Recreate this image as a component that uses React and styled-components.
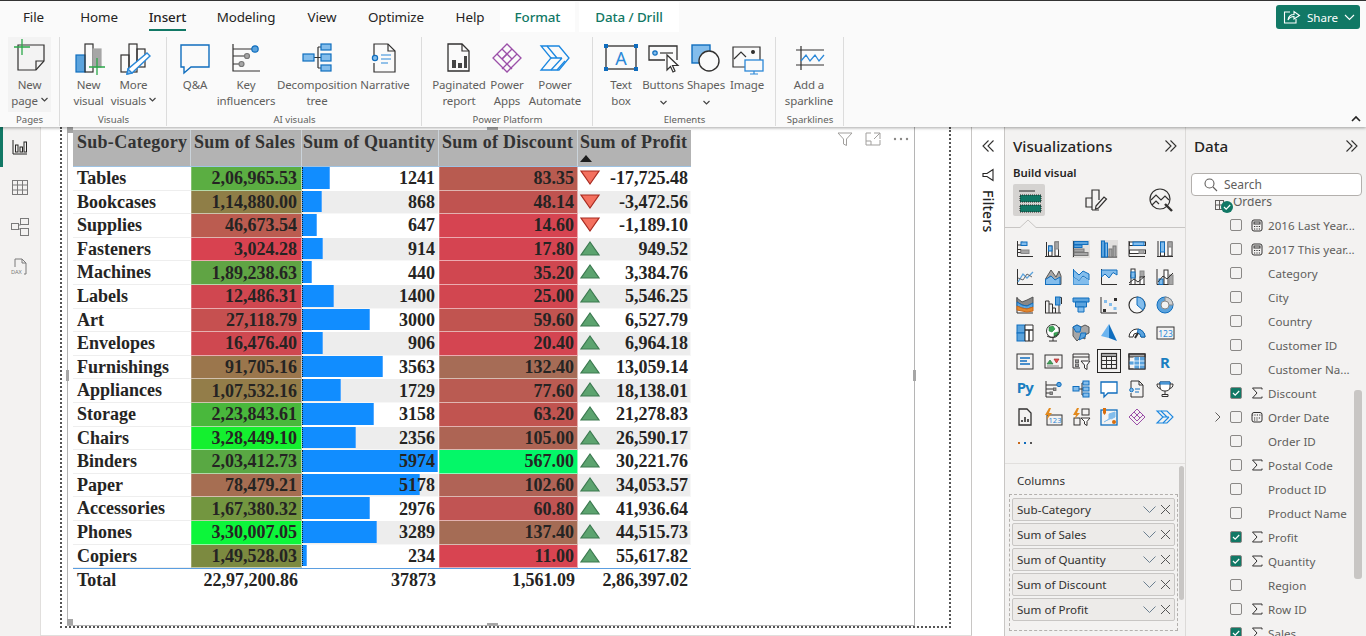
import React from "react";
import styled, { createGlobalStyle } from "styled-components";

const Global = createGlobalStyle`
  html, body { margin: 0; padding: 0; height: 636px; overflow: hidden; background: #fff; }
  body { font-family: "Noto Sans", "Open Sans", sans-serif; color: #252423; }
  * { box-sizing: border-box; }
  #root { width: 1366px; height: 636px; overflow: hidden; }
  svg { overflow: visible; }
`;

const Page = styled.div`width:1366px;height:636px;display:flex;flex-direction:column;overflow:hidden;border-top:1px solid #333;`;
const RibbonWrap = styled.header`position:relative;z-index:3;height:126px;flex:none;background:#fafafa;box-shadow:0 1px 3px rgba(0,0,0,.35);`;
const TabRow = styled.nav`height:31px;display:flex;align-items:stretch;padding-top:1px;`;
const Tab = styled.div`
  width:${p => p.$w}px;margin-right:${p => p.$mr || 0}px;padding-left:${p => p.$pl || 0}px;display:flex;justify-content:center;align-items:center;
  font-size:13.4px;position:relative;letter-spacing:-.1px;
  background:${p => p.$ctx ? "#fff" : "transparent"};color:${p => p.$ctx ? "#117865" : "#252423"};font-weight:${p => p.$ctx ? 500 : 400};
  ${p => p.$on && `font-weight:500;&::after{content:"";position:absolute;left:50%;margin-left:-19px;width:37px;bottom:1px;height:2.5px;background:#117865;}`}
`;
const ShareBtn = styled.div`
  margin-left:auto;margin-right:6px;margin-top:3px;width:84px;height:24px;border-radius:3px;background:#117865;color:#fff;
  display:flex;align-items:center;gap:6px;padding-left:7px;font-size:11.6px;font-weight:400;
`;
const GroupRow = styled.div`display:flex;height:89px;margin-top:5px;`;
const Group = styled.section`
  width:${p => p.$w}px;flex:none;padding-left:${p => p.$pl}px;display:flex;flex-direction:column;
  border-right:1px solid #dcdcdc;margin-right:1px;
`;
const GroupBtns = styled.div`display:flex;height:77px;flex:none;`;
const GroupName = styled.div`margin-left:-${p => p.$pl}px;text-align:center;font-size:9.6px;color:#605e5c;line-height:12px;`;
const RibBtn = styled.div`
  width:${p => p.$w}px;flex:none;display:flex;flex-direction:column;align-items:center;height:75px;
  font-size:11.5px;line-height:16px;color:#605e5c;text-align:center;white-space:nowrap;letter-spacing:-.12px;
  background:${p => p.$hi ? "#f3f3f3" : "transparent"};
`;
const RibIcon = styled.div`height:40px;display:flex;align-items:flex-start;padding-top:3px;flex:none;`;
const Caret = styled.span`font-size:0;display:inline-block;vertical-align:middle;margin-left:3px;`;
const Collapse = styled.div`position:absolute;right:5px;bottom:5px;line-height:0;`;

const Body = styled.main`flex:1;display:flex;min-height:0;`;
const Rail = styled.aside`width:41px;flex:none;background:#f3f2f1;border-right:1px solid #e1dfdd;display:flex;flex-direction:column;align-items:stretch;`;
const RailItem = styled.div`height:40px;display:flex;align-items:center;justify-content:center;border-left:3px solid ${p => p.$on ? "#117865" : "transparent"};padding-right:3px;`;
const Canvas = styled.div`width:931px;flex:none;background:#fff;padding:0 20px 7px 19px;display:flex;flex-direction:column;border-right:1px solid #c8c6c4;border-bottom:1px solid #e1dfdd;`;
const PageFrame = styled.div`flex:1;border-left:2px dotted #555;border-right:2px dotted #555;border-bottom:2px dotted #555;padding:0 34px 0 5px;display:flex;`;
const Visual = styled.div`position:relative;flex:1;border-left:1px solid #b5b5b5;border-right:1px solid #b5b5b5;border-bottom:1px solid #b5b5b5;padding:3px 0 0 5px;`;
const Handle = styled.span`position:absolute;background:#a6a6a6;width:${p => p.$w}px;height:${p => p.$h}px;left:${p => p.$l};top:${p => p.$t};`;
const VisualTools = styled.div`position:absolute;top:4px;right:5px;display:flex;gap:12px;align-items:center;`;

const Table = styled.div`width:618px;font-family:"Liberation Serif","Times New Roman",serif;font-weight:700;font-size:18px;color:#252423;`;
const cols = "118px 111px 137px 139px 113px";
const HeadRow = styled.div`display:grid;grid-template-columns:${cols};height:37px;background:#b3b3b3;border-bottom:1px solid #9fc3e3;`;
const HeadCell = styled.div`position:relative;padding:2px 0 0 ${p => p.$pl}px;color:#333;border-right:1px solid #cad3da;line-height:20px;white-space:nowrap;letter-spacing:.28px;&:last-child{border-right:0;}`;
const SortMark = styled.span`position:absolute;left:2px;top:25px;width:0;height:0;border-left:6px solid transparent;border-right:6px solid transparent;border-bottom:7px solid #1d1d1d;`;
const Row = styled.div`display:grid;grid-template-columns:${cols};height:23.6px;`;
const NameCell = styled.div`padding-left:4px;line-height:22px;border-bottom:1px solid #eee;white-space:nowrap;`;
const ValCell = styled.div`
  position:relative;display:flex;align-items:center;justify-content:flex-end;padding-right:${p => p.$pr}px;line-height:22px;white-space:nowrap;
  background:${p => p.$bg};border-right:1px solid rgba(255,255,255,.55);border-bottom:1px solid rgba(255,255,255,.55);box-shadow:inset 1px 0 0 rgba(255,255,255,.25);
`;
const Bar = styled.span`position:absolute;left:0;top:0;bottom:1px;background:#118dff;border-right:1px solid #55aaff;border-left:1px dotted #123;`;
const BarNum = styled.span`position:relative;`;
const Trend = styled.span`position:absolute;left:2px;top:3px;line-height:0;`;
const TotalRow = styled.div`display:grid;grid-template-columns:${cols};height:24px;border-top:1px solid #5b9ee0;`;
const TotalCell = styled.div`line-height:22px;text-align:${p => p.$left ? "left" : "right"};padding:0 ${p => p.$pr || 0}px 0 ${p => p.$left ? 4 : 0}px;white-space:nowrap;`;

const FilterPane = styled.aside`width:33px;flex:none;background:#fff;border-right:1px solid #c8c6c4;display:flex;flex-direction:column;align-items:center;padding-top:12px;gap:15px;`;
const FilterText = styled.div`writing-mode:vertical-rl;font-size:14px;font-weight:500;color:#252423;letter-spacing:.2px;margin-top:-7px;`;

const VizPane = styled.aside`width:181px;flex:none;background:#f3f2f1;border-right:1px solid #dcdad8;display:flex;flex-direction:column;min-height:0;`;
const PaneHead = styled.div`height:38px;flex:none;display:flex;align-items:center;justify-content:space-between;padding:0 ${p => p.$pr}px 0 8px;font-size:15.2px;font-weight:500;color:#252423;`;
const BuildLabel = styled.div`font-size:11.4px;font-weight:600;color:#252423;padding-left:8px;height:19px;line-height:16px;`;
const BuildTabs = styled.div`display:flex;padding-left:8px;`;
const BuildTab = styled.div`width:32px;height:32px;flex:none;margin-right:${p => p.$mr}px;display:flex;align-items:center;justify-content:center;border-radius:2px;background:${p => p.$on ? "#d5d3d1" : "transparent"};`;
const Notch = styled.div`height:12px;line-height:0;flex:none;`;
const VizGrid = styled.div`display:grid;grid-template-columns:repeat(6,28px);grid-auto-rows:28px;padding:7px 0 0 6px;height:235px;flex:none;`;
const VizCell = styled.div`display:flex;align-items:center;justify-content:center;margin-top:${p => p.$mt || 0}px;`;
const VizSel = styled.div`width:24px;height:24px;border:1px solid #252423;display:flex;align-items:center;justify-content:center;`;
const WellArea = styled.div`position:relative;flex:1;border-top:1px solid #e1dfdd;padding:8px 0 0 0;min-height:0;`;
const WellLabel = styled.div`font-size:11.6px;color:#323130;padding-left:12px;height:22px;line-height:18px;`;
const WellBox = styled.div`margin:0 7px 0 4px;border:1px dashed #b3b0ad;padding:3px 2px;height:137px;display:flex;flex-direction:column;gap:2px;`;
const Well = styled.div`height:23px;flex:none;background:#edebe9;border:1px solid #c8c6c4;border-radius:2px;display:flex;align-items:center;font-size:11.6px;color:#323130;padding:0 3px 0 4px;`;
const WellText = styled.span`flex:1;`;
const WellIcons = styled.span`display:flex;gap:4px;line-height:0;`;
const Scroll = styled.div`position:absolute;background:#c8c6c4;width:${p => p.$w}px;right:${p => p.$r}px;top:${p => p.$t}px;height:${p => p.$h}px;border-radius:3px;`;

const DataPane = styled.aside`position:relative;flex:1;background:#f3f2f1;display:flex;flex-direction:column;min-height:0;overflow:hidden;`;
const SearchBox = styled.div`flex:none;position:relative;z-index:1;margin:8px 4px 0 5px;height:23px;background:#fff;border:1px solid #b3b0ad;border-radius:4px;display:flex;align-items:center;gap:6px;padding-left:12px;font-size:12px;color:#605e5c;box-shadow:0 2px 0 #f3f2f1;`;
const FieldList = styled.div`flex:1;margin-top:-2px;min-height:0;`;
const GroupRowF = styled.div`height:19px;padding-left:47px;position:relative;font-size:12px;line-height:16px;color:#605e5c;`;
const TableGlyph = styled.span`position:absolute;left:29px;top:6px;line-height:0;`;
const OrderTick = styled.span`position:absolute;left:35px;top:7px;width:12px;height:12px;border-radius:50%;background:#117865;display:flex;align-items:center;justify-content:center;line-height:0;`;
const Field = styled.div`position:relative;height:24px;display:flex;align-items:center;padding-left:44px;font-size:11.6px;color:#605e5c;white-space:nowrap;letter-spacing:.05px;`;
const Check = styled.span`width:12px;height:12px;flex:none;border:1px solid #8a8886;border-radius:2px;display:flex;align-items:center;justify-content:center;background:${p => p.$on ? "#117865" : "transparent"};line-height:0;margin-right:8px;`;
const FieldIcon = styled.span`width:14px;flex:none;margin-right:4px;line-height:0;display:flex;justify-content:center;`;
const Expander = styled.span`position:absolute;left:29px;top:7px;line-height:0;`;

const D = "#323130", B = "#106ebe", L = "#83bdec", M = "#5ba3dd", GR = "#a6a6a6", GN = "#2ba84a";
const Ic = ({ s = 36, vb, children, sw = 1.2 }) => {
  const view = vb || s;
  return <svg width={s} height={s} viewBox={`0 0 ${view} ${view}`} fill="none" stroke={D} strokeWidth={sw}>{children}</svg>;
};

const R = {
  newPage: <Ic s={36}><path d="M6 5H32V21L24 30H6Z" /><path d="M32 21H24V30" /><path d="M10 -1V15M2 7H18" stroke={GN} strokeWidth="1.3" /></Ic>,
  newVisual: <Ic><rect x="5" y="15" width="9" height="17" fill={M} stroke={B} /><rect x="14" y="4" width="8" height="28" /><rect x="22" y="9" width="8" height="18" fill={GR} stroke={GR} /><path d="M26 18V35M18 27H34" stroke={GN} strokeWidth="1.3" /></Ic>,
  moreVisuals: <Ic><rect x="5" y="15" width="8" height="17" /><rect x="13" y="4" width="8" height="28" /><rect x="21" y="9" width="8" height="18" /><path d="M31 13L34 16L16 33L11 34L12 29Z" fill="#fff" stroke="#2b88d8" strokeWidth="1.4" /><path d="M12 29L16 33L11 34Z" fill={L} stroke="#2b88d8" /></Ic>,
  qa: <Ic><path d="M4 5H32V27H14L7 33V27H4Z" stroke={B} strokeWidth="1.4" /></Ic>,
  key: <Ic><path d="M5 4V31H32M5 9H24M5 16H16M5 24H11" /><circle cx="27" cy="9" r="3.2" fill={M} stroke={B} /><circle cx="19" cy="16" r="2.5" fill={GR} stroke="#777" /><circle cx="13.5" cy="24" r="2.5" fill={GR} stroke="#777" /></Ic>,
  decomp: <Ic><path d="M15 17.5H19M19 7V28M19 7H22M19 17.5H22M19 28H22" stroke={D} /><rect x="4" y="14" width="11" height="7" fill={L} stroke={B} /><rect x="22" y="4" width="10" height="6" fill={L} stroke={B} /><rect x="22" y="14" width="10" height="7" fill={L} stroke={B} /><rect x="22" y="25" width="10" height="6" fill={L} stroke={B} /></Ic>,
  narrative: <Ic><path d="M7 17V4H21L28 11V32H7V23" /><path d="M21 4V11H28" /><circle cx="8" cy="18" r="2.6" fill={L} stroke={B} /><path d="M14 15H24M14 19H24M14 23H21" stroke="#2b88d8" /></Ic>,
  paginated: <Ic><path d="M7 4H21L28 11V31H7Z" strokeWidth="1.3" /><path d="M21 4V11H28" /><path d="M11 20h4v8h-4zM17 23h4v5h-4zM23 16h3v12h-3z" fill="#444" stroke="none" /></Ic>,
  apps: <Ic><g stroke="#9b4fa8" strokeWidth="1.3"><path d="M18 4L32 18L18 32L4 18Z" /><path d="M13 9L23 19L18 24L8 14M23 9L13 19L18 24L28 14" /><path d="M18 14L13 19M18 24L23 29M18 24L13 29" /></g></Ic>,
  automate: <Ic><g stroke="#1b87e0" strokeWidth="1.3"><path d="M4 6H22L32 18L22 30H4L14 18Z" /><path d="M10 6L20 18M14 18H25M14 30L25 18M20 30L28 21" /></g></Ic>,
  textBox: <Ic><rect x="3" y="6" width="30" height="23" strokeWidth="1.3" /><g fill="#0f6cbd" stroke="none"><rect x="1" y="4" width="4" height="4" /><rect x="31" y="4" width="4" height="4" /><rect x="1" y="27" width="4" height="4" /><rect x="31" y="27" width="4" height="4" /></g><text x="18" y="25" textAnchor="middle" fontFamily="Noto Sans" fontSize="18" fill="#2b88d8" stroke="none">A</text></Ic>,
  buttons: <Ic><path d="M32 20V6H4V20H20" strokeWidth="1.3" /><circle cx="10" cy="13" r="2.2" fill={L} stroke={B} /><path d="M15 13H28" /><path d="M22 15V30L25.5 26.5L28 32L30 31L27.5 25.5H33Z" fill="#fff" /></Ic>,
  shapes: <Ic><rect x="4" y="5" width="18" height="18" fill={L} stroke={B} strokeWidth="1.4" /><circle cx="21" cy="21" r="10" fill="#fafafa" strokeWidth="1.4" /></Ic>,
  image: <Ic><path d="M16 27H4V7H31V20" strokeWidth="1.2" /><path d="M5 19L12 12L17 17" /><circle cx="24" cy="12" r="1.4" fill={D} /><rect x="16" y="20" width="18" height="11" fill="#fafafa" stroke="#2b88d8" strokeWidth="1.3" /><path d="M25 31V34M21 34H29" stroke="#2b88d8" /></Ic>,
  spark: <Ic><path d="M5 10H33M5 25H33M10 6V30" /><path d="M10 21L15 15L19 21L24 15L28 21L33 15" stroke="#2b88d8" strokeWidth="1.3" /></Ic>,
};

const CaretIcon = () => <svg width="7" height="5" viewBox="0 0 7 5" fill="none" stroke="#444" strokeWidth="1.2"><path d="M.5 1L3.5 4L6.5 1" /></svg>;
const DblChev = ({ left }) => <svg width="14" height="14" viewBox="0 0 14 14" fill="none" stroke="#323130" strokeWidth="1.1" style={left ? { transform: "scaleX(-1)" } : null}><path d="M1.5 1.5L7 7L1.5 12.5M6.5 1.5L12 7L6.5 12.5" /></svg>;

const V = {
  a1: <><path d="M1.5 1V16.5H17M1.5 5H6V1.5M1.5 9.5H5V12.5H1.5" /><rect x="5" y="2" width="6" height="3.5" fill={L} stroke={B} /><rect x="5" y="10" width="8" height="3.5" fill={GR} stroke="#888" /></>,
  a2: <><path d="M1 16.5H17M2.5 2V16.5" /><rect x="4.5" y="6" width="3.5" height="10" fill="#fff" /><rect x="4.5" y="6" width="3.5" height="5" fill={L} stroke={B} /><rect x="11" y="2" width="3.5" height="14" fill="#fff" /><rect x="11" y="2" width="3.5" height="7" fill={GR} stroke="#888" /></>,
  a3: <><rect x="0" y="0" width="18" height="18" fill="#e1dfdd" stroke="none" /><path d="M1.5 1V17" /><rect x="2" y="1.5" width="14" height="3" fill={M} stroke={B} /><rect x="2" y="5" width="8" height="2.5" fill={M} stroke={B} /><rect x="2" y="9" width="10" height="3" fill={GR} stroke="#777" /><rect x="2" y="12.5" width="14" height="3" fill={GR} stroke="#777" /></>,
  a4: <><rect x="0" y="0" width="18" height="18" fill="#e1dfdd" stroke="none" /><path d="M1 17H17" /><rect x="1.5" y="1" width="3" height="16" fill={M} stroke={B} /><rect x="5" y="3" width="2.5" height="14" fill={L} stroke={B} /><rect x="9" y="9" width="3" height="8" fill={GR} stroke="#777" /><rect x="13" y="6" width="3" height="11" fill={GR} stroke="#777" /></>,
  a5: <><path d="M1 1V16.5H17" /><rect x="1.5" y="2" width="16" height="3.5" fill="#fff" /><rect x="5" y="2" width="11" height="3.5" fill={L} stroke={B} /><rect x="1.5" y="10" width="16" height="3.5" fill="#fff" /><rect x="11" y="10" width="5" height="3.5" fill={GR} stroke="#888" /></>,
  a6: <><path d="M1 16.5H17M2 1V16.5" /><rect x="4.5" y="2" width="4" height="14" fill="#fff" /><rect x="4.5" y="2" width="4" height="10" fill={L} stroke={B} /><rect x="12" y="2" width="4" height="14" fill="#fff" /><rect x="12" y="2" width="4" height="5" fill={GR} stroke="#888" /></>,
  b1: <><path d="M1.5 1V16.5H17" /><path d="M2 14L7 6L11 10L17 4" stroke={M} strokeWidth="1.3" /><path d="M2 10L7 12L11 6L16 9" stroke="#666" /></>,
  b2: <><path d="M1 16.5H17" /><path d="M1.5 11L7 2L12 9L15 3L17 8V16.5H1.5Z" fill={GR} stroke="#555" /><path d="M1.5 12L7 8L12 13V16.5H1.5Z" fill="#fff" stroke={D} /><path d="M1.5 11.5L7 8L11 12L16 9V16.5H1.5Z" fill={L} stroke={B} /></>,
  b3: <><path d="M1.5 1V16.5H17" stroke={B} /><path d="M1.5 2L7 7L11 3L17 6V12L11 8L7 13L1.5 9Z" fill={L} stroke={B} /><path d="M1.5 9L7 13L11 9L17 12V16.5H1.5Z" fill={L} stroke="none" /></>,
  b4: <><path d="M1.5 1V16.5H17" stroke={D} /><path d="M1.5 2H17V7L13 4.5L9 10L5 6L1.5 9Z" fill={L} stroke={B} /></>,
  b5: <><path d="M1 16.5H17" /><rect x="3" y="7" width="4" height="9.5" fill="#fff" /><rect x="3" y="1" width="4" height="8" fill="#fff" /><rect x="3" y="4" width="4" height="6" fill={L} stroke={B} /><rect x="12" y="3" width="4" height="6" fill={GR} stroke="#888" /><rect x="12" y="9" width="4" height="7.5" fill="#fff" /><path d="M1 15L6 11L10 14L17 8" /></>,
  b6: <><path d="M1 16.5H17M1 1V16.5" /><rect x="3" y="11" width="4" height="5.5" fill={L} stroke={B} /><rect x="8" y="2" width="4" height="14.5" fill="#fff" /><rect x="13" y="7" width="4" height="9.5" fill={GR} stroke="#888" /><path d="M2 14L7 8L11 11L17 5" /></>,
  c1: <><path d="M1 1V17H17" /><path d="M1 2L6 6L11 4L17 1V7L11 10L6 9L1 6Z" fill="#888" stroke="#555" /><path d="M1 6L6 9L11 10L17 7V11L11 13L6 12L1 10Z" fill={M} stroke={B} /><path d="M1 10L6 12L11 13L17 11V15L11 16L6 15L1 14Z" fill="#e3892d" stroke="#c8681b" /></>,
  c2: <><path d="M1 17H17M1.5 5V17M1.5 5H5V17M5 8H8.5V17M8.5 12H11.5V17M11.5 3H15V17M15 1.5H17.5V8" /><rect x="11.5" y="1" width="4.5" height="8" fill={M} stroke={B} /></>,
  c3: <><path d="M1 2H17V6H1Z" fill={M} stroke={B} /><path d="M3.5 6H14.5V11H3.5Z" fill={M} stroke={B} /><path d="M6 11H12V16H6Z" fill={L} stroke={B} /></>,
  c4: <><path d="M1 1V17H17" /><rect x="3" y="13" width="3" height="3" fill={D} stroke="none" /><rect x="4" y="4" width="3" height="3" fill={L} stroke="none" /><rect x="9" y="7" width="3" height="3" fill={L} stroke="none" /><rect x="14" y="2" width="3" height="3" fill={D} stroke="none" /><rect x="13.5" y="11" width="3" height="3" fill={L} stroke="none" /></>,
  c5: <><circle cx="9" cy="9" r="8" fill="#f8f8f8" strokeWidth="1.2" /><path d="M9 1A8 8 0 0 1 15 14.2L9 9Z" fill={L} stroke={B} /></>,
  c6: <><circle cx="9" cy="9" r="8" fill={M} stroke={B} /><path d="M9 1A8 8 0 0 1 17 9H12.5A3.5 3.5 0 0 0 9 5.5Z" fill="#d0d0d0" stroke="#888" /><circle cx="9" cy="9" r="4" fill="#f3f2f1" stroke="#888" /></>,
  d1: <><rect x="1" y="1" width="8" height="8" fill={M} stroke={B} /><rect x="1" y="9" width="8" height="8" fill={M} stroke={B} /><path d="M9 1H17V6H9ZM9 6H13V17H9ZM13 6H17V17H13Z" fill="#fff" /></>,
  d2: <><circle cx="9" cy="7" r="6.5" fill="#fff" /><path d="M5 3L9 2L11 5L8 8L5 7ZM10 9L14 8L13 12L10 12Z" fill="#3aa655" stroke="#22823c" strokeWidth=".6" /><path d="M3 12A8 8 0 0 0 15 3M9 14V17M5 17H13" /></>,
  d3: <><path d="M1 3L5 1L9 3L13 1L17 3V9L13 11V15L9 13L5 17L1 12Z" fill={GR} stroke="#555" /><path d="M1 3L5 1L9 3L8 8L4 8Z" fill={M} stroke={B} /><path d="M9 9L14 9L13 13L7 16Z" fill={M} stroke={B} /></>,
  d4: <><path d="M9 0L17 17L9 14Z" fill="#106ebe" stroke="none" /><path d="M9 0L1 12L9 14Z" fill="#6bb4ef" stroke="none" /></>,
  d5: <><path d="M1 13A8 8 0 0 1 17 13H13A4 4 0 0 0 5 13Z" fill="#fff" /><path d="M10 5A8 8 0 0 1 17 13H13A4 4 0 0 0 9.5 9Z" fill={M} stroke={B} /><path d="M7 14L10 9" strokeWidth="2" /></>,
  d6: <><rect x="1" y="3" width="17" height="12" /><text x="9.5" y="12.5" textAnchor="middle" fontFamily="Noto Sans" fontSize="8.5" fill="#2b88d8" stroke="none">123</text></>,
  e1: <><rect x="1" y="2" width="16" height="15" /><path d="M4 6H14M4 9H11M4 12H14" stroke={B} strokeWidth="1.4" /></>,
  e2: <><rect x="1" y="3" width="17" height="13" /><path d="M3 12L6 8L9 12Z" fill="#43a35b" stroke="#2b7a40" strokeWidth=".7" /><path d="M10 7H15L12.5 11Z" fill="#e8504f" stroke="#a52b2b" strokeWidth=".7" /><path d="M3 14H15" strokeWidth=".6" /></>,
  e3: <><path d="M1 2H17V8M8 16H1V2M1 5H17" /><rect x="3.5" y="8" width="3" height="2.5" fill={GR} stroke="#666" /><rect x="3.5" y="12" width="3" height="2.5" fill={GR} stroke="#666" /><path d="M9 9H18L15 13V17.5L12.5 16V13Z" fill="#fff" /></>,
  e4: <><rect x="1.5" y="1.5" width="15" height="15" strokeWidth="1.2" /><rect x="1.5" y="1.5" width="15" height="3" fill={GR} /><path d="M1.5 8.5H16.5M1.5 12.5H16.5M6.5 4.5V16.5M11.5 4.5V16.5" /></>,
  e5: <><rect x="1" y="2" width="16" height="15" /><rect x="1" y="2" width="16" height="3" fill={GR} /><rect x="6" y="5" width="11" height="12" fill={M} stroke="none" /><rect x="1" y="9" width="5" height="4" fill={M} stroke="none" /><path d="M1 9H17M1 13H17M6 5V17M11.5 5V17" stroke="#fff" strokeWidth=".8" /><rect x="1" y="2" width="16" height="15" /></>,
  e6: <text x="9" y="15.5" textAnchor="middle" fontFamily="Noto Sans" fontWeight="700" fontSize="15" fill="#1a7fc1" stroke="none">R</text>,
  f1: <text x="9" y="13" textAnchor="middle" fontFamily="Noto Sans" fontWeight="700" fontSize="15" fill="#1a7fc1" stroke="none" letterSpacing="-.8">Py</text>,
  f2: <><path d="M2 1V17H17M2 5H13M2 9H9M2 13H6" /><circle cx="15" cy="4.5" r="2.2" fill={M} stroke={B} /><rect x="9.5" y="8" width="2.4" height="2.4" fill={GR} stroke="#666" /><rect x="6" y="12" width="2.4" height="2.4" fill={GR} stroke="#666" /></>,
  f3: <><path d="M7 9H10M10 3V15M10 3H11M10 9H11M10 15H11" /><rect x="1" y="6.5" width="6" height="4.5" fill={L} stroke={B} /><rect x="11" y="1" width="6" height="4" fill={L} stroke={B} /><rect x="11" y="7" width="6" height="4" fill={L} stroke={B} /><rect x="11" y="13" width="6" height="4" fill={L} stroke={B} /></>,
  f4: <path d="M1 2H17V13H8L4 17V13H1Z" fill="#fff" stroke={B} strokeWidth="1.3" />,
  f5: <><path d="M3 8V1H11L15 5V17H3V13" /><path d="M11 1V5H15" /><circle cx="3.5" cy="10" r="1.8" fill={L} stroke={B} /><path d="M7 9H12M7 12H11" stroke={B} /></>,
  f6: <><path d="M4 2H14V7C14 10 12 11 9 11C6 11 4 10 4 7Z" fill="#fff" /><path d="M4 2H14V4H4Z" fill={L} stroke={B} /><path d="M4 4H1C1 7 2 8 4.5 8.5M14 4H17C17 7 16 8 13.5 8.5M9 11V14M6 16.5H12V14.5H6Z" /></>,
  g1: <><path d="M3 1H11L15 5V17H3Z" fill="#f3f2f1" strokeWidth="1.3" /><path d="M6 14V12M9 14V9M12 14V11" strokeWidth="1.6" /></>,
  g2: <><rect x="3" y="7" width="15" height="10" /><text x="11" y="15" textAnchor="middle" fontFamily="Noto Sans" fontSize="7.5" fill="#2b88d8" stroke="none">123</text><path d="M5 0L1 7H4L2.5 12L8 5H5L7 0Z" fill="#e38a1d" stroke="none" /></>,
  g3: <><rect x="10" y="1" width="7" height="6" /><rect x="2" y="10" width="6" height="7" /><path d="M9 10H18L15 13.5V17.5L12.5 16V13.5Z" fill="#fff" /><path d="M5 0L1 7H4L2.5 11L8 5H5L7 0Z" fill="#e38a1d" stroke="none" /></>,
  g4: <><rect x="1" y="2" width="16" height="15" stroke={B} strokeWidth="1.3" /><path d="M4 14L9 11V6L15 4V9L11 11" fill={L} stroke={L} /><path d="M3 0H6V5L4.5 7L3 5Z" fill="#d86d0b" stroke="none" /><circle cx="14" cy="14" r="2" fill="#d86d0b" stroke="none" /></>,
  g5: <g stroke="#9b4fa8"><path d="M9 1L17 9L9 17L1 9Z" /><path d="M6 4L12 10L9 13L3 7M12 4L6 10L9 13L15 7" /></g>,
  g6: <g stroke="#1b87e0" strokeWidth="1.1"><path d="M1 3H11L17 9L11 15H1L7 9Z" /><path d="M5 3L11 9M7 9H13M7 15L13 9" /></g>,
};
const vizRows = ["a1 a2 a3 a4 a5 a6", "b1 b2 b3 b4 b5 b6", "c1 c2 c3 c4 c5 c6", "d1 d2 d3 d4 d5 d6", "e1 e2 e3 e4 e5 e6", "f1 f2 f3 f4 f5 f6", "g1 g2 g3 g4 g5 g6"].join(" ").split(" ");

const rows = [
  ["Tables", "2,06,965.53", "#5bae42", 1241, "83.35", "#b85b50", "-17,725.48", 0],
  ["Bookcases", "1,14,880.00", "#8f7e47", 868, "48.14", "#c05350", "-3,472.56", 0],
  ["Supplies", "46,673.54", "#bb5c50", 647, "14.60", "#d64451", "-1,189.10", 0],
  ["Fasteners", "3,024.28", "#d84250", 914, "17.80", "#d54451", "949.52", 1],
  ["Machines", "1,89,238.63", "#60a444", 440, "35.20", "#d04750", "3,384.76", 1],
  ["Labels", "12,486.31", "#d04750", 1400, "25.00", "#d24650", "5,546.25", 1],
  ["Art", "27,118.79", "#c65050", 3000, "59.60", "#c15450", "6,527.79", 1],
  ["Envelopes", "16,476.40", "#cf4850", 906, "20.40", "#d44551", "6,964.18", 1],
  ["Furnishings", "91,705.16", "#9b764c", 3563, "132.40", "#a66c56", "13,059.14", 1],
  ["Appliances", "1,07,532.16", "#937d49", 1729, "77.60", "#ba5b52", "18,138.01", 1],
  ["Storage", "2,23,843.61", "#49b83c", 3158, "63.20", "#c15450", "21,278.83", 1],
  ["Chairs", "3,28,449.10", "#14f02f", 2356, "105.00", "#ad6454", "26,590.17", 1],
  ["Binders", "2,03,412.73", "#59a843", 5974, "567.00", "#04f768", "30,221.76", 1],
  ["Paper", "78,479.21", "#a66e52", 5178, "102.60", "#b06356", "34,053.57", 1],
  ["Accessories", "1,67,380.32", "#739640", 2976, "60.80", "#c15453", "41,936.64", 1],
  ["Phones", "3,30,007.05", "#0cf63a", 3289, "137.40", "#a56c55", "44,515.73", 1],
  ["Copiers", "1,49,528.03", "#7c8a40", 234, "11.00", "#d84451", "55,617.82", 1],
];

const UpT = () => <svg width="20" height="15" viewBox="0 0 20 15"><path d="M10 1L19 14H1Z" fill="#5ca36f" stroke="#3c7a50" strokeWidth="1.2" /></svg>;
const DownT = () => <svg width="20" height="15" viewBox="0 0 20 15"><path d="M1 1H19L10 14Z" fill="#f4705f" stroke="#a82a20" strokeWidth="1.2" /></svg>;

const fields = [
  ["2016 Last Year...", 0, "calc"], ["2017 This year...", 0, "calc"], ["Category", 0], ["City", 0], ["Country", 0], ["Customer ID", 0], ["Customer Na...", 0],
  ["Discount", 1, "sum"], ["Order Date", 0, "date"], ["Order ID", 0], ["Postal Code", 0, "sum"], ["Product ID", 0], ["Product Name", 0],
  ["Profit", 1, "sum"], ["Quantity", 1, "sum"], ["Region", 0], ["Row ID", 0, "sum"], ["Sales", 1, "sum"],
];
const FIcon = ({ k }) => {
  if (k === "sum") return <svg width="12" height="12" viewBox="0 0 12 12" fill="none" stroke="#323130" strokeWidth="1"><path d="M11 2.5V1H1.5L6 6L1.5 11H11V9.5" /></svg>;
  if (k === "calc") return <svg width="12" height="13" viewBox="0 0 12 13" fill="none" stroke="#323130" strokeWidth="1"><rect x="1" y="1" width="10" height="11" rx="2" /><rect x="3" y="3" width="6" height="2" /><path d="M3 7.5H9M3 10H9" strokeDasharray="1.2 1.2" /></svg>;
  if (k === "date") return <svg width="12" height="12" viewBox="0 0 12 12" fill="none" stroke="#323130" strokeWidth="1"><rect x="1" y="1.5" width="10" height="9.5" rx="2" /><path d="M1 4H11M3 7H9M3 9H7" strokeDasharray="1.2 1.2" /></svg>;
  return null;
};
const Tick = () => <svg width="10" height="10" viewBox="0 0 10 10" fill="none" stroke="#fff" strokeWidth="1.2"><path d="M2 5L4.2 7.2L8.2 3" /></svg>;

const ribbon = [
  { name: "Pages", w: 60, pl: 8, items: [["newPage", ["New", "page"], 43, true, true]] },
  { name: "Visuals", w: 106, pl: 5, items: [["newVisual", ["New", "visual"], 45], ["moreVisuals", ["More", "visuals"], 45, true]] },
  { name: "AI visuals", w: 254, pl: 4, items: [["qa", ["Q&A"], 46], ["key", ["Key", "influencers"], 56], ["decomp", ["Decomposition", "tree"], 86], ["narrative", ["Narrative"], 50]] },
  { name: "Power Platform", w: 170, pl: 9, items: [["paginated", ["Paginated", "report"], 54], ["apps", ["Power", "Apps"], 42], ["automate", ["Power", "Automate"], 54]] },
  { name: "Elements", w: 182, pl: 6, items: [["textBox", ["Text", "box"], 42], ["buttons", ["Buttons", "caret"], 42], ["shapes", ["Shapes", "caret"], 44], ["image", ["Image"], 38]] },
  { name: "Sparklines", w: 67, pl: 2, items: [["spark", ["Add a", "sparkline"], 60]] },
];

const Lines = ({ lines, trailing }) => lines.map((l, i) => {
  if (l === "caret") return <div key={i}><CaretIcon /></div>;
  return <div key={i}>{l}{trailing && i === lines.length - 1 && <Caret><CaretIcon /></Caret>}</div>;
});

export default function App() {
  return (
    <Page>
      <Global />
      <RibbonWrap>
        <TabRow>
          <Tab $w={67}>File</Tab><Tab $w={64}>Home</Tab><Tab $w={73} $on>Insert</Tab><Tab $w={84}>Modeling</Tab><Tab $w={68}>View</Tab><Tab $w={80}>Optimize</Tab><Tab $w={64} $pl={4}>Help</Tab>
          <Tab $w={75} $mr={4} $ctx>Format</Tab><Tab $w={100} $ctx>Data / Drill</Tab>
          <ShareBtn>
            <svg width="18" height="16" viewBox="0 0 18 16" fill="none" stroke="#fff" strokeWidth="1.1"><path d="M7 3H1.5V14H13V10" /><path d="M5 11C5.5 7.5 8 5.5 11 5.5V2.5L16.5 6.5L11 10V7.5C8.5 7.5 6.5 8.5 5 11Z" /></svg>
            Share
            <svg width="11" height="7" viewBox="0 0 11 7" fill="none" stroke="#fff" strokeWidth="1.1"><path d="M1 1L5.5 5.5L10 1" /></svg>
          </ShareBtn>
        </TabRow>
        <GroupRow>
          {ribbon.map(g => (
            <Group key={g.name} $w={g.w} $pl={g.pl}>
              <GroupBtns>
                {g.items.map(([ic, lines, w, trailing, hi]) => (
                  <RibBtn key={ic} $w={w} $hi={hi}>
                    <RibIcon>{R[ic]}</RibIcon>
                    <Lines lines={lines} trailing={trailing} />
                  </RibBtn>
                ))}
              </GroupBtns>
              <GroupName $pl={g.pl}>{g.name}</GroupName>
            </Group>
          ))}
        </GroupRow>
        <Collapse><svg width="10" height="7" viewBox="0 0 10 7" fill="none" stroke="#252423" strokeWidth="1.6"><path d="M1 6L5 2L9 6" /></svg></Collapse>
      </RibbonWrap>
      <Body>
        <Rail>
          <RailItem $on>
            <svg width="16" height="15" viewBox="0 0 16 15" fill="none" stroke="#252423" strokeWidth="1"><path d="M1 0V14H15" /><rect x="3.5" y="5" width="2.5" height="7" /><rect x="8" y="7" width="2.5" height="5" /><rect x="12" y="2" width="2.5" height="10" /></svg>
          </RailItem>
          <RailItem>
            <svg width="16" height="15" viewBox="0 0 16 15" fill="none" stroke="#7a7a7a" strokeWidth="1"><rect x=".5" y=".5" width="15" height="14" /><path d="M.5 5H15.5M.5 10H15.5M5.5 .5V14.5M10.5 .5V14.5" /></svg>
          </RailItem>
          <RailItem>
            <svg width="18" height="18" viewBox="0 0 18 18" fill="none" stroke="#7a7a7a" strokeWidth="1"><rect x=".5" y="5.5" width="7" height="6" /><rect x="9.5" y=".5" width="8" height="6" /><rect x="9.5" y="10.5" width="8" height="7" /><path d="M7.5 7H9.5M7.5 11H9.5" /></svg>
          </RailItem>
          <RailItem>
            <svg width="18" height="18" viewBox="0 0 18 18" fill="none" stroke="#7a7a7a" strokeWidth="1"><path d="M4 9V1H11L15 5V16H13" /><path d="M11 1V5H15" /><text x="0" y="16" fontFamily="Noto Sans" fontSize="5.6" fill="#7a7a7a" stroke="none">DAX</text></svg>
          </RailItem>
        </Rail>
        <Canvas>
          <PageFrame>
            <Visual>
              <Handle $w={6} $h={6} $l="-1px" $t="0" />
              <Handle $w={6} $h={6} $l="-1px" $t="calc(100% - 6px)" />
              <Handle $w={3} $h={11} $l="-2px" $t="243px" />
              <Handle $w={3} $h={11} $l="calc(100% - 1px)" $t="243px" />
              <Handle $w={11} $h={3} $l="419px" $t="0" />
              <Handle $w={11} $h={3} $l="419px" $t="calc(100% - 2px)" />
              <VisualTools>
                <svg width="16" height="16" viewBox="0 0 16 16" fill="none" stroke="#a19f9d" strokeWidth="1"><path d="M1 2H15L9.5 8V14.5L6.5 13V8Z" /></svg>
                <svg width="16" height="14" viewBox="0 0 16 14" fill="none" stroke="#a19f9d" strokeWidth="1"><path d="M6 1H1V13H15V8M9 1H15V7M15 1L9 7M1 9H6V13" /></svg>
                <svg width="16" height="4" viewBox="0 0 16 4" fill="#8a8886"><circle cx="2" cy="2" r="1.2" /><circle cx="8" cy="2" r="1.2" /><circle cx="14" cy="2" r="1.2" /></svg>
              </VisualTools>
              <Table>
                <HeadRow>
                  <HeadCell $pl={4}>Sub-Category</HeadCell><HeadCell $pl={3}>Sum of Sales</HeadCell><HeadCell $pl={1}>Sum of Quantity</HeadCell><HeadCell $pl={3}>Sum of Discount</HeadCell>
                  <HeadCell $pl={2}>Sum of Profit<SortMark /></HeadCell>
                </HeadRow>
                {rows.map((r, i) => (
                  <Row key={r[0]}>
                    <NameCell>{r[0]}</NameCell>
                    <ValCell $bg={r[2]} $pr={4}>{r[1]}</ValCell>
                    <ValCell $bg={i % 2 ? "#ededed" : "#fff"} $pr={3}>
                      <Bar style={{ width: `${(r[3] / 5974) * 136}px` }} />
                      <BarNum>{r[3]}</BarNum>
                    </ValCell>
                    <ValCell $bg={r[5]} $pr={3}>{r[4]}</ValCell>
                    <ValCell $bg={i % 2 ? "#ededed" : "#fff"} $pr={2}>
                      <Trend>{r[7] ? <UpT /> : <DownT />}</Trend>
                      {r[6]}
                    </ValCell>
                  </Row>
                ))}
                <TotalRow>
                  <TotalCell $left>Total</TotalCell><TotalCell $pr={4}>22,97,200.86</TotalCell><TotalCell $pr={3}>37873</TotalCell><TotalCell $pr={3}>1,561.09</TotalCell><TotalCell $pr={3}>2,86,397.02</TotalCell>
                </TotalRow>
              </Table>
            </Visual>
          </PageFrame>
        </Canvas>
        <FilterPane>
          <DblChev left />
          <svg width="12" height="14" viewBox="0 0 12 14" fill="none" stroke="#252423" strokeWidth="1.1"><path d="M11 1.5V12.5L5 8.5H1V5.5H5Z" /></svg>
          <FilterText>Filters</FilterText>
        </FilterPane>
        <VizPane>
          <PaneHead $pr={7}>Visualizations<DblChev /></PaneHead>
          <BuildLabel>Build visual</BuildLabel>
          <BuildTabs>
            <BuildTab $on $mr={35}>
              <svg width="26" height="26" viewBox="0 0 26 26" fill="none"><path d="M3 4H19" stroke="#252423" /><rect x="4" y="8" width="21" height="7" fill="#117865" stroke="#252423" strokeDasharray="1 1" /><rect x="4" y="18" width="21" height="7" fill="#117865" stroke="#252423" strokeDasharray="1 1" /></svg>
            </BuildTab>
            <BuildTab $mr={33}>
              <svg width="24" height="24" viewBox="0 0 24 24" fill="none" stroke="#323130" strokeWidth="1.2"><path d="M8 22V10H2V19H8M8 10V2H15V12M15 22H8" /><path d="M12 18L20 9L22.5 11L14.5 20L11.5 21Z" fill="#f3f2f1" /></svg>
            </BuildTab>
            <BuildTab $mr={0}>
              <svg width="26" height="26" viewBox="0 0 26 26" fill="none" stroke="#323130" strokeWidth="1.2"><circle cx="12" cy="12" r="10" /><path d="M3 13L8 8L13 13L17 9L21 13" /><path d="M4 18L8 14L11 17" stroke="#323130" /><path d="M17 17L24 24" strokeWidth="2.4" /></svg>
            </BuildTab>
          </BuildTabs>
          <Notch><svg width="180" height="12" viewBox="0 0 180 12" fill="none" stroke="#c8c6c4"><path d="M0 11.5H15L23 4L31 11.5H180" /></svg></Notch>
          <VizGrid>
            {vizRows.map(k => (
              <VizCell key={k}>
                {k === "e4" ? <VizSel><Ic s={18} sw={1}>{V[k]}</Ic></VizSel> : <Ic s={18} sw={1}>{V[k]}</Ic>}
              </VizCell>
            ))}
            <VizCell $mt={-4}>
              <svg width="16" height="4" viewBox="0 0 16 4"><rect x="1" y="1" width="2" height="2" fill="#c8681b" /><rect x="7" y="1" width="2" height="2" fill="#0f6cbd" /><rect x="13" y="1" width="2" height="2" fill="#555" /></svg>
            </VizCell>
          </VizGrid>
          <WellArea>
            <Scroll $w={5} $r={1} $t={2} $h={134} />
            <WellLabel>Columns</WellLabel>
            <WellBox>
              {["Sub-Category", "Sum of Sales", "Sum of Quantity", "Sum of Discount", "Sum of Profit"].map(t => (
                <Well key={t}>
                  <WellText>{t}</WellText>
                  <WellIcons>
                    <svg width="13" height="11" viewBox="0 0 13 11" fill="none" strokeWidth="1"><path d="M.5 2.5L6.5 8.5L12.5 2.5" stroke="#6b7f90" /></svg>
                    <svg width="11" height="11" viewBox="0 0 11 11" fill="none" stroke="#555" strokeWidth="1"><path d="M1 1L10 10M10 1L1 10" /></svg>
                  </WellIcons>
                </Well>
              ))}
            </WellBox>
          </WellArea>
        </VizPane>
        <DataPane>
          <PaneHead $pr={7}>Data<DblChev /></PaneHead>
          <SearchBox>
            <svg width="14" height="14" viewBox="0 0 14 14" fill="none" stroke="#605e5c" strokeWidth="1.1"><circle cx="5.5" cy="5.5" r="4.5" /><path d="M9 9L13 13" /></svg>
            Search
          </SearchBox>
          <FieldList>
            <GroupRowF>
              <TableGlyph><svg width="9" height="10" viewBox="0 0 9 10" fill="none" stroke="#605e5c"><rect x=".5" y=".5" width="8" height="9" /><path d="M.5 5H8.5M4.5 .5V9.5" /></svg></TableGlyph>
              <OrderTick><Tick /></OrderTick>Orders
            </GroupRowF>
            {fields.map(([name, on, ic]) => (
              <Field key={name}>
                {name === "Order Date" && <Expander><svg width="6" height="10" viewBox="0 0 6 10" fill="none" stroke="#605e5c"><path d="M.5 .5L5 5L.5 9.5" /></svg></Expander>}
                <Check $on={on}>{on ? <Tick /> : null}</Check>
                <FieldIcon>{ic ? <FIcon k={ic} /> : null}</FieldIcon>
                {name}
              </Field>
            ))}
          </FieldList>
          <Scroll $w={8} $r={4} $t={263} $h={189} />
        </DataPane>
      </Body>
    </Page>
  );
}
